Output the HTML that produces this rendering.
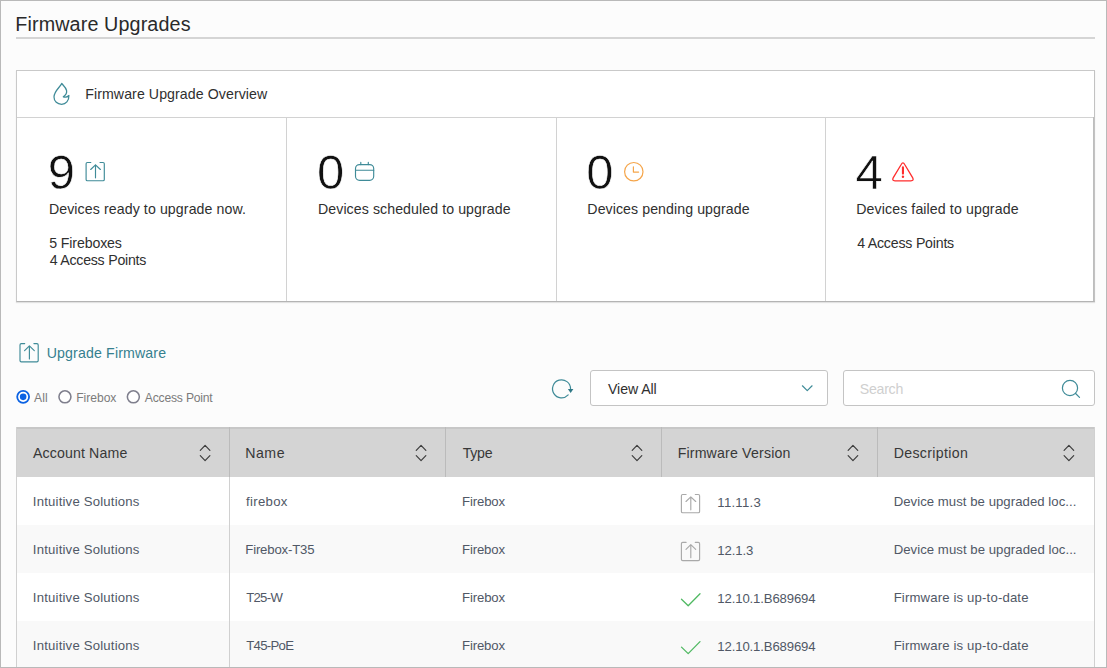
<!DOCTYPE html>
<html lang="en">
<head>
<meta charset="utf-8">
<title>Firmware Upgrades</title>
<style>
html,body{margin:0;padding:0}
body{width:1107px;height:668px;overflow:hidden;background:#fcfcfc;font-family:"Liberation Sans",sans-serif;position:relative;color:#333}
*{box-sizing:border-box}
.t{position:absolute;white-space:nowrap;line-height:1;margin:0;font-weight:400;display:block}
.big{-webkit-text-stroke:.6px #fff;paint-order:fill stroke}
#frame{position:absolute;left:0;top:0;width:1107px;height:668px;border:1px solid #b9b9b9;pointer-events:none;z-index:10}
#rule{position:absolute;left:16px;top:37px;width:1079px;height:2px;background:#d5d5d5}
#card{position:absolute;left:16px;top:70px;width:1079px;height:232px;background:#fff;border:1px solid #c9c9c9;border-right-color:#c2c2c2;border-bottom-color:#b4b4b4;box-shadow:0 1px 1px rgba(0,0,0,.10)}
#card .hd{position:absolute;left:0;top:46px;width:100%;height:1px;background:#d2d2d2}
#card .vd{position:absolute;top:47px;bottom:0;width:1px;background:#d2d2d2}
#card .vr{position:absolute;top:46px;bottom:0;right:0;width:1px;background:#bdbdbd}
.box{position:absolute;background:#fff;border:1px solid #c4c4c4;border-radius:3px}
#thead{position:absolute;left:16px;top:427px;width:1079px;height:50px;background:#d4d4d4;border-top:2px solid #c7c7c7}
#thead .vd{position:absolute;top:-2px;bottom:0;width:1px;background:#bbb}
.row{position:absolute;left:16px;width:1079px;height:48px;background:#fff}
.row.alt{background:#f9f9f9}
#tb-l,#tb-r,#tb-c{position:absolute;top:427px;height:241px;width:1px;background:#d0d0d0}
svg{position:absolute;overflow:visible}
</style>
</head>
<body>
<h1 style="margin:0;font-size:0"><span class="t" style="left:15.28px;top:15.00px;font-size:19.742px;letter-spacing:0.124px;color:#2a2a2a">Firmware Upgrades</span></h1>
<div id="rule"></div>

<section class="overview" aria-label="Firmware Upgrade Overview">
<div id="card">
  <div class="hd"></div>
  <div class="vd" style="left:269px"></div>
  <div class="vd" style="left:538.5px"></div>
  <div class="vd" style="left:807.5px"></div>
  <div class="vr"></div>
</div>

<!-- overview header -->
<svg style="left:52px;top:82px" width="20" height="24" viewBox="0 0 20 24" fill="none" stroke="#3f8b98" stroke-width="1.25" stroke-linejoin="round" stroke-linecap="round">
  <path d="M9.7 1.5 C8.2 5 2.0 9.2 2.0 15.0 C2.0 19.4 5.4 22.3 9.6 22.3 C13.8 22.3 17.1 19.0 16.9 13.5 C15.6 15.0 13.6 15.6 11.3 14.8 C13.6 13.2 15.0 11.2 14.6 8.6 C14.0 5.6 11.2 3.4 9.7 1.5 Z"/>
</svg>
<div class="t" style="left:85.22px;top:87.00px;font-size:14.174px;letter-spacing:0.079px;color:#2f2f2f">Firmware Upgrade Overview</div>

<!-- cell 1 -->
<div class="t big" style="left:47.80px;top:148.00px;font-size:49.0px;letter-spacing:-0.322px;color:#111">9</div>
<svg style="left:85px;top:161px" width="20" height="20" viewBox="0 0 20 20" fill="none" stroke="#3f8b98" stroke-width="1.15" stroke-linecap="round" stroke-linejoin="round"><g transform="translate(0.2 0.6)">
  <path d="M5.6 0.9 H2.2 Q0.9 0.9 0.9 2.2 V17.8 Q0.9 19.1 2.2 19.1 H17.8 Q19.1 19.1 19.1 17.8 V2.2 Q19.1 0.9 17.8 0.9 H14.8"/>
  <path d="M10.3 16.2 V3.3 M5.5 7.9 L10.3 3.2 L15.2 7.9"/>
</g></svg>
<div class="t" style="left:48.90px;top:202.00px;font-size:14.174px;letter-spacing:0.097px;color:#2f2f2f">Devices ready to upgrade now.</div>
<div class="t" style="left:49.25px;top:236.00px;font-size:14.174px;letter-spacing:-0.129px;color:#2f2f2f">5 Fireboxes</div>
<div class="t" style="left:49.68px;top:253.00px;font-size:14.174px;letter-spacing:-0.232px;color:#2f2f2f">4 Access Points</div>

<!-- cell 2 -->
<div class="t big" style="left:317.00px;top:148.00px;font-size:49.0px;letter-spacing:-0.322px;color:#111">0</div>
<svg style="left:354px;top:161px" width="20" height="20" viewBox="0 0 20 20" fill="none" stroke="#3f8b98" stroke-width="1.15" stroke-linecap="round"><g transform="translate(0.4 0.6)">
  <rect x="1.1" y="3.0" width="18.2" height="15.7" rx="4"/>
  <path d="M1.1 8.6 H19.3 M6.4 0.7 V3.0 M13.9 0.7 V3.0"/>
</g></svg>
<div class="t" style="left:317.98px;top:202.00px;font-size:14.174px;letter-spacing:0.080px;color:#2f2f2f">Devices scheduled to upgrade</div>

<!-- cell 3 -->
<div class="t big" style="left:586.30px;top:148.00px;font-size:49.0px;letter-spacing:-0.322px;color:#111">0</div>
<svg style="left:623px;top:161px" width="20" height="20" viewBox="0 0 20 20" fill="none" stroke="#f5a54a" stroke-width="1.2" stroke-linecap="round" stroke-linejoin="round"><g transform="translate(0.6 0.6)">
  <circle cx="10.2" cy="10.1" r="9.2"/>
  <path d="M9.8 5.2 V10.5 H15.0"/>
</g></svg>
<div class="t" style="left:587.33px;top:202.00px;font-size:14.174px;letter-spacing:0.076px;color:#2f2f2f">Devices pending upgrade</div>

<!-- cell 4 -->
<div class="t big" style="left:855.40px;top:148.00px;font-size:49.0px;letter-spacing:-0.322px;color:#111">4</div>
<svg style="left:891px;top:161px" width="23" height="20" viewBox="0 0 23 20" fill="none" stroke="#ff2d2d" stroke-width="1.3" stroke-linejoin="round" stroke-linecap="round"><g transform="translate(0.6 0.6)">
  <path d="M9.6 2.9 Q11.35 -0.5 13.1 2.9 L21.0 16.0 Q22.7 19.25 19.3 19.25 H3.4 Q0.0 19.25 1.7 16.0 Z"/>
  <path d="M11.35 5.8 V12.0" stroke-width="2.1"/>
  <circle cx="11.35" cy="15.2" r="1.2" fill="#ff2d2d" stroke="none"/>
</g></svg>
<div class="t" style="left:856.24px;top:202.00px;font-size:14.174px;letter-spacing:0.105px;color:#2f2f2f">Devices failed to upgrade</div>
<div class="t" style="left:857.16px;top:236.00px;font-size:14.174px;letter-spacing:-0.207px;color:#2f2f2f">4 Access Points</div>

</section>

<!-- upgrade link -->
<div class="actions">
<svg style="left:19px;top:342px" width="20" height="20" viewBox="0 0 20 20" fill="none" stroke="#3f8b98" stroke-width="1.15" stroke-linecap="round" stroke-linejoin="round"><g transform="translate(0.1 0.7)">
  <path d="M5.6 0.9 H2.2 Q0.9 0.9 0.9 2.2 V17.8 Q0.9 19.1 2.2 19.1 H17.8 Q19.1 19.1 19.1 17.8 V2.2 Q19.1 0.9 17.8 0.9 H14.8"/>
  <path d="M10.3 16.2 V3.3 M5.5 7.9 L10.3 3.2 L15.2 7.9"/>
</g></svg>
<a class="t" style="left:46.68px;top:346.00px;font-size:14.174px;letter-spacing:0.148px;color:#35808f">Upgrade Firmware</a>

<!-- radios -->
<svg style="left:16px;top:389px" width="14.4" height="14.4" viewBox="0 0 14.4 14.4"><g transform="translate(0.0 0.8)"><circle cx="7.15" cy="7.05" r="5.95" fill="#fff" stroke="#0b62e3" stroke-width="1.8"/><circle cx="7.15" cy="7.05" r="3.3" fill="#0b62e3"/></g></svg><label class="t" style="left:34.08px;top:392.00px;font-size:12.149px;letter-spacing:0.107px;color:#7b7b7b">All</label>
<svg style="left:57px;top:389px" width="14.4" height="14.4" viewBox="0 0 14.4 14.4"><g transform="translate(0.8 0.8)"><circle cx="7.15" cy="7.05" r="6.0" fill="#fff" stroke="#7f7f8d" stroke-width="1.55"/></g></svg><label class="t" style="left:76.28px;top:392.00px;font-size:12.149px;letter-spacing:-0.048px;color:#7b7b7b">Firebox</label>
<svg style="left:126px;top:389px" width="14.4" height="14.4" viewBox="0 0 14.4 14.4"><g transform="translate(0.2 0.8)"><circle cx="7.15" cy="7.05" r="6.0" fill="#fff" stroke="#7f7f8d" stroke-width="1.55"/></g></svg><label class="t" style="left:144.86px;top:392.00px;font-size:12.149px;letter-spacing:-0.202px;color:#7b7b7b">Access Point</label>

<!-- toolbar -->
<svg style="left:551px;top:378px" width="24" height="22" viewBox="0 0 24 22" fill="none" stroke="#3f8b98" stroke-width="1.2" stroke-linecap="round"><g transform="translate(0.0 0.6)">
  <path d="M19.55 10.2 A9 9 0 1 0 17.2 16.3"/>
  <path d="M16.9 10.3 H22.4 L19.65 14.4 Z" fill="#2f7886" stroke="none"/>
</g></svg>
<div class="box" style="left:590px;top:370px;width:238px;height:36px"></div>
<div class="t" style="left:607.99px;top:382.00px;font-size:14.174px;letter-spacing:-0.080px;color:#2f2f2f">View All</div>
<svg style="left:801px;top:384px" width="13" height="9" viewBox="0 0 13 9" fill="none" stroke="#3f8b98" stroke-width="1.2" stroke-linecap="round" stroke-linejoin="round">
  <path d="M1.4 1.8 L6.25 6.6 L11.1 1.8"/>
</svg>
<div class="box" style="left:842.5px;top:370px;width:252.5px;height:36px"></div>
<div class="t" style="left:859.71px;top:382.00px;font-size:14.174px;letter-spacing:-0.254px;color:#cfcfcf">Search</div>
<svg style="left:1060px;top:378px" width="22" height="22" viewBox="0 0 22 22" fill="none" stroke="#3f8b98" stroke-width="1.2" stroke-linecap="round">
  <circle cx="10.0" cy="10.0" r="7.6"/>
  <path d="M15.6 15.5 L19.5 19.4"/>
</svg>

</div>

<!-- table -->
<div class="grid" role="table">
<div class="row" style="top:477px"></div>
<div class="row alt" style="top:525px"></div>
<div class="row" style="top:573px"></div>
<div class="row alt" style="top:621px"></div>
<div id="thead">
  <div class="vd" style="left:212.5px"></div>
  <div class="vd" style="left:428.5px"></div>
  <div class="vd" style="left:645px"></div>
  <div class="vd" style="left:860.5px"></div>
</div>
<div id="tb-l" style="left:16px"></div>
<div id="tb-c" style="left:228.5px;top:477px;height:191px"></div>
<div id="tb-r" style="left:1094px"></div>
<div class="t" style="left:32.95px;top:446.00px;font-size:14.174px;letter-spacing:0.138px;color:#383838">Account Name</div><div class="t" style="left:245.25px;top:446.00px;font-size:14.174px;letter-spacing:0.505px;color:#383838">Name</div><div class="t" style="left:462.75px;top:446.00px;font-size:14.174px;letter-spacing:-0.307px;color:#383838">Type</div><div class="t" style="left:677.63px;top:446.00px;font-size:14.174px;letter-spacing:0.174px;color:#383838">Firmware Version</div><div class="t" style="left:893.63px;top:446.00px;font-size:14.174px;letter-spacing:0.332px;color:#383838">Description</div>
<svg style="left:199px;top:444px" width="12" height="18" viewBox="0 0 12 18" fill="none" stroke="#3c3c3c" stroke-width="1.2" stroke-linecap="round" stroke-linejoin="round"><g transform="translate(0.7 0.0)"><path d="M0.6 6.3 L5.4 1.4 L10.2 6.3 M0.6 11.7 L5.4 16.6 L10.2 11.7"/></g></svg>
<svg style="left:415px;top:444px" width="12" height="18" viewBox="0 0 12 18" fill="none" stroke="#3c3c3c" stroke-width="1.2" stroke-linecap="round" stroke-linejoin="round"><g transform="translate(0.65 0.0)"><path d="M0.6 6.3 L5.4 1.4 L10.2 6.3 M0.6 11.7 L5.4 16.6 L10.2 11.7"/></g></svg>
<svg style="left:631px;top:444px" width="12" height="18" viewBox="0 0 12 18" fill="none" stroke="#3c3c3c" stroke-width="1.2" stroke-linecap="round" stroke-linejoin="round"><g transform="translate(0.6 0.0)"><path d="M0.6 6.3 L5.4 1.4 L10.2 6.3 M0.6 11.7 L5.4 16.6 L10.2 11.7"/></g></svg>
<svg style="left:847px;top:444px" width="12" height="18" viewBox="0 0 12 18" fill="none" stroke="#3c3c3c" stroke-width="1.2" stroke-linecap="round" stroke-linejoin="round"><g transform="translate(0.55 0.0)"><path d="M0.6 6.3 L5.4 1.4 L10.2 6.3 M0.6 11.7 L5.4 16.6 L10.2 11.7"/></g></svg>
<svg style="left:1063px;top:444px" width="12" height="18" viewBox="0 0 12 18" fill="none" stroke="#3c3c3c" stroke-width="1.2" stroke-linecap="round" stroke-linejoin="round"><g transform="translate(0.5 0.0)"><path d="M0.6 6.3 L5.4 1.4 L10.2 6.3 M0.6 11.7 L5.4 16.6 L10.2 11.7"/></g></svg>

<div class="t" style="left:32.82px;top:495.00px;font-size:13.161px;letter-spacing:0.194px;color:#505866">Intuitive Solutions</div><div class="t" style="left:246.12px;top:495.00px;font-size:13.161px;letter-spacing:0.285px;color:#505866">firebox</div><div class="t" style="left:462.04px;top:495.00px;font-size:13.161px;letter-spacing:-0.135px;color:#505866">Firebox</div><div class="t" style="left:717.35px;top:496.00px;font-size:13.161px;letter-spacing:0.235px;color:#505866">11.11.3</div><div class="t" style="left:893.63px;top:495.00px;font-size:13.161px;letter-spacing:0.046px;color:#505866">Device must be upgraded loc...</div>
<div class="t" style="left:32.82px;top:543.00px;font-size:13.161px;letter-spacing:0.194px;color:#505866">Intuitive Solutions</div><div class="t" style="left:245.27px;top:543.00px;font-size:13.161px;letter-spacing:-0.162px;color:#505866">Firebox-T35</div><div class="t" style="left:462.04px;top:543.00px;font-size:13.161px;letter-spacing:-0.141px;color:#505866">Firebox</div><div class="t" style="left:717.35px;top:544.00px;font-size:13.161px;letter-spacing:-0.137px;color:#505866">12.1.3</div><div class="t" style="left:893.63px;top:543.00px;font-size:13.161px;letter-spacing:0.053px;color:#505866">Device must be upgraded loc...</div>
<div class="t" style="left:32.82px;top:591.00px;font-size:13.161px;letter-spacing:0.194px;color:#505866">Intuitive Solutions</div><div class="t" style="left:246.14px;top:591.00px;font-size:13.161px;letter-spacing:-0.677px;color:#505866">T25-W</div><div class="t" style="left:462.04px;top:591.00px;font-size:13.161px;letter-spacing:-0.135px;color:#505866">Firebox</div><div class="t" style="left:717.35px;top:592.00px;font-size:13.161px;letter-spacing:-0.142px;color:#505866">12.10.1.B689694</div><div class="t" style="left:893.63px;top:591.00px;font-size:13.161px;letter-spacing:0.156px;color:#505866">Firmware is up-to-date</div>
<div class="t" style="left:32.82px;top:639.00px;font-size:13.161px;letter-spacing:0.194px;color:#505866">Intuitive Solutions</div><div class="t" style="left:246.14px;top:639.00px;font-size:13.161px;letter-spacing:-0.668px;color:#505866">T45-PoE</div><div class="t" style="left:462.04px;top:639.00px;font-size:13.161px;letter-spacing:-0.141px;color:#505866">Firebox</div><div class="t" style="left:717.35px;top:640.00px;font-size:13.161px;letter-spacing:-0.143px;color:#505866">12.10.1.B689694</div><div class="t" style="left:893.63px;top:639.00px;font-size:13.161px;letter-spacing:0.156px;color:#505866">Firmware is up-to-date</div>
<svg style="left:680px;top:493px" width="20" height="20" viewBox="0 0 20 20" fill="none" stroke="#a9a9a9" stroke-width="1.15" stroke-linecap="round" stroke-linejoin="round"><g transform="translate(0.5 0.6)"><path d="M5.6 0.9 H2.2 Q0.9 0.9 0.9 2.2 V17.8 Q0.9 19.1 2.2 19.1 H17.8 Q19.1 19.1 19.1 17.8 V2.2 Q19.1 0.9 17.8 0.9 H14.8"/><path d="M10.3 16.2 V3.3 M5.5 7.9 L10.3 3.2 L15.2 7.9"/></g></svg>
<svg style="left:680px;top:541px" width="20" height="20" viewBox="0 0 20 20" fill="none" stroke="#a9a9a9" stroke-width="1.15" stroke-linecap="round" stroke-linejoin="round"><g transform="translate(0.5 0.5)"><path d="M5.6 0.9 H2.2 Q0.9 0.9 0.9 2.2 V17.8 Q0.9 19.1 2.2 19.1 H17.8 Q19.1 19.1 19.1 17.8 V2.2 Q19.1 0.9 17.8 0.9 H14.8"/><path d="M10.3 16.2 V3.3 M5.5 7.9 L10.3 3.2 L15.2 7.9"/></g></svg>
<svg style="left:680px;top:592px" width="20" height="14" viewBox="0 0 20 14" fill="none" stroke="#4fb962" stroke-width="1.3" stroke-linecap="round" stroke-linejoin="round"><g transform="translate(0.5 0.9)"><path d="M1.0 6.3 L7.7 12.8 L19.5 0.8"/></g></svg>
<svg style="left:680px;top:640px" width="20" height="14" viewBox="0 0 20 14" fill="none" stroke="#4fb962" stroke-width="1.3" stroke-linecap="round" stroke-linejoin="round"><g transform="translate(0.5 0.8)"><path d="M1.0 6.3 L7.7 12.8 L19.5 0.8"/></g></svg>

</div>
<div id="frame"></div>

</body>
</html>
